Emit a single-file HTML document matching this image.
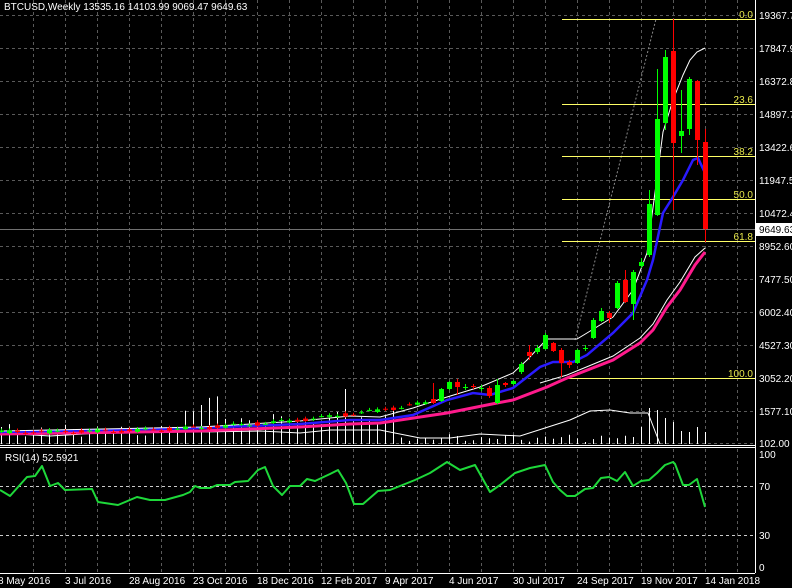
<!DOCTYPE html>
<html><head><meta charset="utf-8"><style>
html,body{margin:0;padding:0;background:#000;width:792px;height:588px;overflow:hidden}
svg{display:block}
text{font-family:"Liberation Sans",sans-serif;font-size:10px;fill:#fff}
</style></head><body>
<svg id="c" width="792" height="588" xmlns="http://www.w3.org/2000/svg">
<rect width="792" height="588" fill="#000"/>
<g id="grid" stroke="#5a5a5a" stroke-dasharray="3,3" stroke-width="1"></g>
<g id="vol" stroke="#fff" stroke-width="1"></g>
<line x1="575" y1="340" x2="656" y2="19" stroke="#888" stroke-dasharray="2,2"/>
<g stroke="#ffff66" stroke-width="1">
<line x1="562" y1="19.5" x2="755" y2="19.5"/>
<line x1="562" y1="104.5" x2="755" y2="104.5"/>
<line x1="562" y1="156.5" x2="755" y2="156.5"/>
<line x1="562" y1="199.5" x2="755" y2="199.5"/>
<line x1="562" y1="241.5" x2="755" y2="241.5"/>
<line x1="568" y1="378.5" x2="755" y2="378.5"/>
</g>
<g text-anchor="end">
<text x="753" y="18" style="fill:#e8e84a">0.0</text>
<text x="753" y="103" style="fill:#e8e84a">23.6</text>
<text x="753" y="155" style="fill:#e8e84a">38.2</text>
<text x="753" y="198" style="fill:#e8e84a">50.0</text>
<text x="753" y="240" style="fill:#e8e84a">61.8</text>
<text x="753" y="377" style="fill:#e8e84a">100.0</text>
</g>
<line x1="0" y1="229.5" x2="755" y2="229.5" stroke="#707070"/>
<g id="ma"></g>
<g id="candles"></g>
<line x1="755.5" y1="0" x2="755.5" y2="573" stroke="#fff"/>
<line x1="0" y1="445.5" x2="755" y2="445.5" stroke="#fff"/>
<line x1="0" y1="447.5" x2="755" y2="447.5" stroke="#fff"/>
<line x1="0" y1="573.5" x2="755" y2="573.5" stroke="#fff"/>
<g stroke="#ccc" stroke-dasharray="3,3"><line x1="0" y1="486.5" x2="755" y2="486.5"/><line x1="0" y1="535.5" x2="755" y2="535.5"/></g>
<polyline id="rsi" fill="none" stroke="#1ed83a" stroke-width="2" stroke-linejoin="round"/>
<text x="4" y="10">BTCUSD,Weekly  13535.16 14103.99 9069.47 9649.63</text>
<text x="5" y="461">RSI(14) 52.5921</text>
<g id="plab"></g>
<rect x="756" y="223" width="36" height="13" fill="#fff"/>
<text x="759" y="233" style="fill:#000">9649.63</text>
<text x="759" y="458">100</text><text x="759" y="490">70</text><text x="759" y="539">30</text><text x="759" y="571">0</text>
<text x="-2" y="584">8 May 2016</text><text x="65" y="584">3 Jul 2016</text><text x="129" y="584">28 Aug 2016</text>
<text x="193" y="584">23 Oct 2016</text><text x="257" y="584">18 Dec 2016</text><text x="321" y="584">12 Feb 2017</text>
<text x="385" y="584">9 Apr 2017</text><text x="449" y="584">4 Jun 2017</text><text x="513" y="584">30 Jul 2017</text>
<text x="577" y="584">24 Sep 2017</text><text x="641" y="584">19 Nov 2017</text><text x="705" y="584">14 Jan 2018</text>
</svg>
<script>
var NS="http://www.w3.org/2000/svg";
function el(p,t,a){var e=document.createElementNS(NS,t);for(var k in a)e.setAttribute(k,a[k]);p.appendChild(e);return e;}
var g=document.getElementById('grid');
for(var x=33;x<755;x+=32){el(g,'line',{x1:x+.5,y1:0,x2:x+.5,y2:444});el(g,'line',{x1:x+.5,y1:449,x2:x+.5,y2:572});}
var labs=["19367.7","17847.9","16372.8","14897.7","13422.6","11947.5","10472.4","8952.60","7477.50","6002.40","4527.30","3052.20","1577.10","102.00"];
var pl=document.getElementById('plab');
for(var i=0;i<14;i++){var y=15+i*33.0;if(i==13)y=443;el(g,'line',{x1:0,y1:y+.5,x2:755,y2:y+.5});var t=el(pl,'text',{x:759,y:y+4});t.textContent=labs[i];}
var vol=document.getElementById('vol');
function vh(i){var x=1+8*i;var s=Math.sin(i*1.7)*4+Math.cos(i*0.9)*3;var h=14+s;
 if(x>180&&x<220)h=40+Math.sin(i)*8; if(x>=225&&x<330)h=24+s; if(x==345)h=55; if(x>330&&x<400&&x!=345)h=26+s;
 if(x>=400&&x<640)h=Math.max(2,6+s*0.6);
 var m={641:17,649:36,657:34,665:26,673:22,681:13,689:12,697:17,705:12};if(m[x])h=m[x];return h;}
for(var i=0;i<89;i++){var x=1+8*i;el(vol,'line',{x1:x+.5,y1:444,x2:x+.5,y2:444-vh(i)});}
el(vol,'polyline',{fill:'none',points:"0,433 50,436 100,433 150,432 200,432 260,431 300,433 330,430 380,430 420,438 450,438 480,434 520,436 545,428 570,420 590,411 610,410 630,413 648,413 660,444"});
var ma=document.getElementById('ma');
el(ma,'polyline',{fill:'none',stroke:'#ff1a8c','stroke-width':3,points:"0,434 200,431 300,427 350,424 380,423 447,413 497,403 513,400 547,387 567,378 613,360 640,343 653,330 667,307 680,290 695,265 705,252"});
el(ma,'polyline',{fill:'none',stroke:'#fff','stroke-width':1,points:"540,383 567,375 613,356 640,338 653,324 667,300 680,282 695,257 705,248"});
el(ma,'polyline',{fill:'none',stroke:'#2a1aff','stroke-width':2.5,points:"0,432 200,428 300,424 350,420 380,420 413,415 447,400 473,393 490,395 513,388 540,367 553,362 573,362 587,355 613,333 633,313 647,280 653,260 663,213 673,197 683,180 693,160 698,158 705,173"});
el(ma,'polyline',{fill:'none',stroke:'#fff','stroke-width':1,points:"0,431 200,427 300,421 350,416 380,417 413,408 447,397 480,387 513,373 527,360 547,339 577,339 587,333 613,317 633,290 647,253 663,132 673,100 683,75 690,60 697,52 705,48"});
var C=[];
for(var i=0;i<54;i++){var x=1+8*i;var b=432-29*Math.pow(i/53,2.5);var o=b+Math.sin(i*2.3)*1.5,c=b-Math.sin(i*1.1+1)*1.8;C.push([x,o,c,Math.min(o,c)-2,Math.max(o,c)+1]);}
var R=[[433,399,403,383,404],[441,401,389,388,402],[449,389,382,381,390],[457,382,387,379,395],[465,387,387,384,390],[473,386,387,384,389],[481,388,388,385,391],[489,388,396,386,398],[497,403,385,379,404],[505,383,385,382,387],[513,384,381,380,385],[521,372,364,362,374],[529,352,356,345,360],[537,352,348,345,354],[545,349,335,333,350],[553,343,351,342,352],[561,350,363,348,377],[569,362,365,360,368],[577,363,350,349,364],[585,348,348,345,351],[593,338,320,318,339],[601,321,311,308,322],[609,313,318,311,323],[617,308,283,281,309],[625,280,302,270,303],[633,304,272,270,320],[641,266,262,258,268],[649,255,204,190,257],[657,215,119,69,216],[665,123,57,50,130],[673,51,143,19,210],[681,136,131,90,153],[689,129,79,77,135],[697,81,140,80,165],[705,142,229,129,242]];
C=C.concat(R);
var cg=document.getElementById('candles');
C.forEach(function(d){var x=d[0],o=d[1],c=d[2];var up=c<=o;var col=up?'#00ff00':'#ff0000';
 el(cg,'line',{x1:x+.5,y1:d[3],x2:x+.5,y2:d[4],stroke:col});
 var t=Math.min(o,c),h=Math.max(1,Math.abs(o-c));
 if(d[0]>=433||h>1.5) el(cg,'rect',{x:x-2,y:t,width:5,height:h,fill:col});
 else el(cg,'line',{x1:x-2,y1:t+.5,x2:x+3,y2:t+.5,stroke:col});});
document.getElementById('rsi').setAttribute('points',"0,490 10,496 27,477 35,476 42,466 50,486 58,483 65,490 92,489 98,502 118,505 137,497 150,500 165,500 183,495 190,492 195,486 200,488 210,488 217,485 230,485 235,482 248,481 258,470 265,467 273,486 282,495 290,486 300,486 307,479 315,481 330,474 338,470 346,483 354,504 363,504 378,491 390,490 400,486 415,480 430,473 447,462 460,470 475,465 490,492 500,485 515,473 530,468 545,465 553,482 560,490 567,496 575,496 585,489 593,488 601,478 609,477 617,481 625,472 633,486 641,481 649,480 657,473 665,465 673,462 675,464 683,485 689,485 697,479 705,507");
</script>
</body></html>
